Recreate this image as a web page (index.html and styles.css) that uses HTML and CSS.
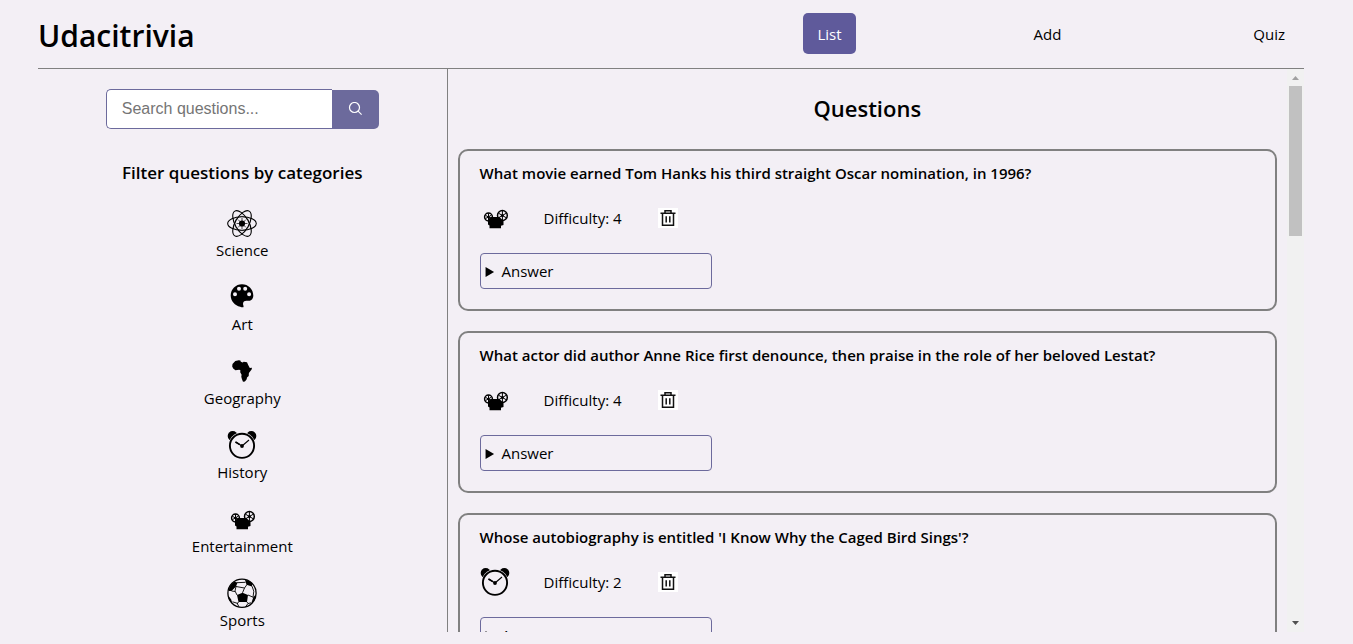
FILE: index.html
```html
<!DOCTYPE html>
<html lang="en">
<head>
<meta charset="utf-8">
<title>Udacitrivia</title>
<link rel="stylesheet" href="styles.css">
</head>
<body>
<svg class="sprite" aria-hidden="true">
  <symbol id="science" viewBox="0 0 30 30">
    <g fill="none" stroke="#000" stroke-width="1.1">
      <ellipse cx="15" cy="15.500" rx="14.3" ry="6.8"/>
      <ellipse cx="15" cy="15.500" rx="14.3" ry="6.8" transform="rotate(60 15 15.500)"/>
      <ellipse cx="15" cy="15.500" rx="14.3" ry="6.8" transform="rotate(120 15 15.500)"/>
      <circle cx="15" cy="15.500" r="7.2" stroke-width=".5"/>
      <path stroke-width=".7" d="M15 10v11M9.500 15.500h11M11.100 11.600l7.800 7.800M18.900 11.600l-7.800 7.800"/>
    </g>
    <circle cx="15" cy="15.500" r="3.1"/>
  </symbol>
  <symbol id="art" viewBox="0 0 30 30">
    <path fill-rule="evenodd" d="M15 2.300C8.700 2.300 3.700 7.200 3.700 13.500c0 5.700 4.300 10.200 9.500 11.200 1.400.5 3 .9 3.300.2.400-1-.8-2.200-.4-3.900.4-1.500 1.600-2.200 3.200-2.300l2.700.1c2.800 0 4.300-2.600 4.300-5.300C26.300 7.200 21.300 2.300 15 2.300zM8 10.300a2 2 0 1 1 0 4 2 2 0 0 1 0-4zM12 4.700a2 2 0 1 1 0 4 2 2 0 0 1 0-4zM18.200 4.700a2 2 0 1 1 0 4 2 2 0 0 1 0-4zM22.100 10.300a2 2 0 1 1 0 4 2 2 0 0 1 0-4z"/>
  </symbol>
  <symbol id="geography" viewBox="0 0 30 30">
    <path d="M8.300 5l3.500-.7 1.600.2.400 1.300 1.900.7 1-.7 3.300.5 1.200 2.600 1.600 3.200 2.200-.3-.4 1.800-2.700 3.300-.2 3.200-1.700 1.500-.3 1.600-1.800 2.300-1.900.3-1.100-2.800-.6-2.300.3-2-1.400-2.400.2-2-1.200-.6-3.800.6-2.200-1.700-1-2.100.3-2.500z"/>
  </symbol>
  <symbol id="history" viewBox="0 0 30 30">
    <circle cx="5.700" cy="6" r="5"/><circle cx="24.300" cy="6" r="5"/>
    <circle cx="15" cy="15.800" r="13.600" fill="#f3eff5"/>
    <circle cx="15" cy="15.800" r="12.100" fill="none" stroke="#000" stroke-width="1.900"/>
    <path d="M8.500 12l6.500 4 7-6" fill="none" stroke="#000" stroke-width="1.100"/>
    <path d="M8.500 12l4 2.400" stroke="#000" stroke-width="1.600"/>
    <circle cx="15" cy="16" r="1.900"/>
  </symbol>
  <symbol id="entertainment" viewBox="0 0 30 30">
    <g fill="none" stroke="#000" stroke-width="1.500">
      <circle cx="8.500" cy="14" r="3.900"/>
      <circle cx="22.400" cy="12.500" r="4.900"/>
      <path stroke-width="1" d="M8.500 10.200v7M5.300 12.200l6 3.500M5.300 15.700l6-3.500M22.400 8v9M18.500 10.200l7.800 4.600M18.500 14.800l7.800-4.600"/>
    </g>
    <circle cx="8.500" cy="14" r="1.200"/><circle cx="22.400" cy="12.500" r="1.500"/>
    <path d="M8 16.500l2.500-2.500h9l2.500 2.500 1.500 1v4.500l-2.500.7v2.500H9.500v-2.700L8 21.500z"/>
  </symbol>
  <symbol id="sports" viewBox="0 0.500 30 30">
    <circle cx="15" cy="15.700" r="14.100" fill="none" stroke="#000" stroke-width="1.300"/>
    <path d="M10 17.500l5.500-2.200 5.500 2.200-1 7h-8.500zM7.500 4.200l3 .8L9 9l-4.500 4.500-3 0C2 9 4.600 5.800 7.500 4.200zM18 2.300c2.500.4 5 1.500 7 3.200v3.400l-5.500-1.700zM1.200 18l3 4 1.300 4.600C3 24.300 1.300 21.400 1.200 18zM28.800 17l-2.500 2.800-1.700 4.900.2.900c2.700-2.300 4-5.400 4-8.600z"/>
    <path d="M10 5.200l8.500-.4M20 7l-2.500 3.500-2 4.800M9 9l-1 4.500 2 4M4.500 13.500l3.500.5M9 9l8.500 1.500M25 8.700l1.800 5-.8 6.100M21 17.500l5.300 2.300M11.500 24.500l-1.500 2M11 26l-5.500-1.700M20 24.500l1 1.500-2.500 3.300M21 26l3-.7M10.500 26.500l1.500 2.800" fill="none" stroke="#000" stroke-width=".9"/>
  </symbol>
  <symbol id="trash" viewBox="0 0 20 20">
    <g fill="none" stroke="#111" stroke-width="1.500">
      <path d="M2.500 5.200h15M7 5V2.800h6V5M4.500 5.500v11.700h11V5.500M8.200 8.200v6.300M11.800 8.200v6.300"/>
    </g>
  </symbol>
  <symbol id="search" viewBox="0 0 14 14">
    <g fill="none" stroke="#fff" stroke-width="1.200"><circle cx="6.500" cy="5.500" r="5"/><path d="M10.100 9.100l3.500 3.500"/></g>
  </symbol>
</svg>

<div class="app">
  <header class="header">
    <h1 class="logo">Udacitrivia</h1>
    <nav class="nav">
      <a class="nav-link active" href="#list">List</a>
      <a class="nav-link" href="#add">Add</a>
      <a class="nav-link" href="#quiz">Quiz</a>
    </nav>
  </header>
  <div class="content">
    <aside class="sidebar">
      <form class="search">
        <input class="search-input" type="text" placeholder="Search questions..." aria-label="Search questions">
        <button class="search-button" type="button" aria-label="Search"><svg class="search-icon"><use href="#search"/></svg></button>
      </form>
      <h2 class="filter-title">Filter questions by categories</h2>
      <ul class="categories">
        <li><button class="category" type="button"><svg class="icon"><use href="#science"/></svg>Science</button></li>
        <li><button class="category" type="button"><svg class="icon"><use href="#art"/></svg>Art</button></li>
        <li><button class="category" type="button"><svg class="icon"><use href="#geography"/></svg>Geography</button></li>
        <li><button class="category" type="button"><svg class="icon"><use href="#history"/></svg>History</button></li>
        <li><button class="category" type="button"><svg class="icon"><use href="#entertainment"/></svg>Entertainment</button></li>
        <li><button class="category" type="button"><svg class="icon"><use href="#sports"/></svg>Sports</button></li>
      </ul>
    </aside>
    <main class="main">
      <section class="questions">
        <h2 class="questions-title">Questions</h2>
        <article class="card">
          <h3 class="question">What movie earned Tom Hanks his third straight Oscar nomination, in 1996?</h3>
          <div class="meta">
            <svg class="icon"><use href="#entertainment"/></svg>
            <span class="difficulty">Difficulty: 4</span>
            <button class="delete" type="button" aria-label="Delete question"><svg class="trash"><use href="#trash"/></svg></button>
          </div>
          <details class="answer"><summary>Answer</summary></details>
        </article>
        <article class="card">
          <h3 class="question">What actor did author Anne Rice first denounce, then praise in the role of her beloved Lestat?</h3>
          <div class="meta">
            <svg class="icon"><use href="#entertainment"/></svg>
            <span class="difficulty">Difficulty: 4</span>
            <button class="delete" type="button" aria-label="Delete question"><svg class="trash"><use href="#trash"/></svg></button>
          </div>
          <details class="answer"><summary>Answer</summary></details>
        </article>
        <article class="card">
          <h3 class="question">Whose autobiography is entitled 'I Know Why the Caged Bird Sings'?</h3>
          <div class="meta">
            <svg class="icon"><use href="#history"/></svg>
            <span class="difficulty">Difficulty: 2</span>
            <button class="delete" type="button" aria-label="Delete question"><svg class="trash"><use href="#trash"/></svg></button>
          </div>
          <details class="answer"><summary>Answer</summary></details>
        </article>
      </section>
      <div class="scrollbar" aria-hidden="true">
        <svg class="arrow" viewBox="0 0 17 17"><path d="M5 11l3.500-4 3.500 4z" fill="#a0a0a0"/></svg>
        <div class="track"><div class="thumb"></div></div>
        <svg class="arrow" viewBox="0 0 17 17"><path d="M5 6l3.500 4L12 6z" fill="#505050"/></svg>
      </div>
    </main>
  </div>
</div>
</body>
</html>
```
FILE: styles.css
```css
* { box-sizing: border-box; }

body {
  margin: 0;
  background: #f3eff5;
  color: #000;
  font-family: "Open Sans", "Noto Sans", sans-serif;
  font-size: 15px;
  line-height: 20px;
}

h1, h2, h3, ul { margin: 0; padding: 0; font-weight: 600; }
button { font: inherit; color: inherit; border: 0; cursor: pointer; }
.sprite { display: none; }

.app {
  display: flex;
  flex-direction: column;
  height: 100vh;
  padding: 0 49px 12px 38px;
}

.header {
  display: flex;
  align-items: center;
  justify-content: space-between;
  padding: 13px 5px 14px 0;
  border-bottom: 1px solid #808080;
}
.logo { padding-top: 5px; font-size: 30px; line-height: 36px; }
.nav { display: flex; justify-content: space-between; width: 39.3%; }
.nav-link {
  padding: 11px 14px 10px;
  border-radius: 5px;
  color: #000;
  text-decoration: none;
}
.nav-link.active { background: #5f5a9b; color: #fff; }

.content {
  display: grid;
  grid-template-columns: 11fr 23fr;
  flex: 1;
  min-height: 0;
}

.sidebar {
  display: flex;
  flex-direction: column;
  align-items: center;
  padding-top: 20px;
  border-right: 1px solid #808080;
  overflow: hidden;
}
.search { display: flex; align-items: flex-end; width: 273px; }
.search-input {
  flex: 1;
  min-width: 0;
  height: 40px;
  padding: 0 15px;
  border: 1px solid #6c6a9c;
  border-right: 0;
  border-radius: 5px 0 0 5px;
  background: #fff;
  font-family: "Liberation Sans", Arial, sans-serif;
  font-size: 16px;
}
.search-input::placeholder { color: #757575; }
.search-button {
  width: 47px;
  height: 39px;
  padding: 0;
  border-radius: 0 5px 5px 0;
  background: #6c6a9c;
}
.search-icon { width: 14px; height: 14px; }

.filter-title { margin-top: 32px; font-size: 17px; line-height: 24px; }
.categories {
  display: flex;
  flex-direction: column;
  gap: 20px;
  margin-top: 23px;
  list-style: none;
}
.category {
  display: flex;
  flex-direction: column;
  align-items: center;
  width: 100%;
  padding: 0;
  background: none;
  font-weight: 400;
  line-height: 24px;
}
.icon { display: block; width: 30px; height: 30px; }

.main { display: flex; min-width: 0; min-height: 0; }
.questions {
  display: flex;
  flex-direction: column;
  flex: 1;
  gap: 20px;
  padding: 20px 10px 0;
  overflow: hidden;
}
.questions-title {
  padding: 3px 0 5px;
  font-size: 22px;
  line-height: 32px;
  text-align: center;
}
.card {
  flex: none;
  display: flex;
  flex-direction: column;
  gap: 20px;
  padding: 12px 20px 20px;
  border: 2px solid #808080;
  border-radius: 10px;
}
.question { font-size: 15px; line-height: 20px; }
.meta { display: flex; align-items: center; }
.difficulty { width: 80px; margin: 0 34px; white-space: nowrap; }
.delete { padding: 0; background: #fff; }
.trash { display: block; width: 20px; height: 20px; }
.answer {
  width: 232px;
  padding: 7px 5px;
  border: 1px solid #6c6a9c;
  border-radius: 4px;
}

.scrollbar {
  display: flex;
  flex-direction: column;
  width: 17px;
  background: #f1f1f1;
}
.arrow { display: block; width: 17px; height: 17px; }
.track { flex: 1; padding: 0 2px; }
.thumb { height: 150px; background: #c1c1c1; }
```
